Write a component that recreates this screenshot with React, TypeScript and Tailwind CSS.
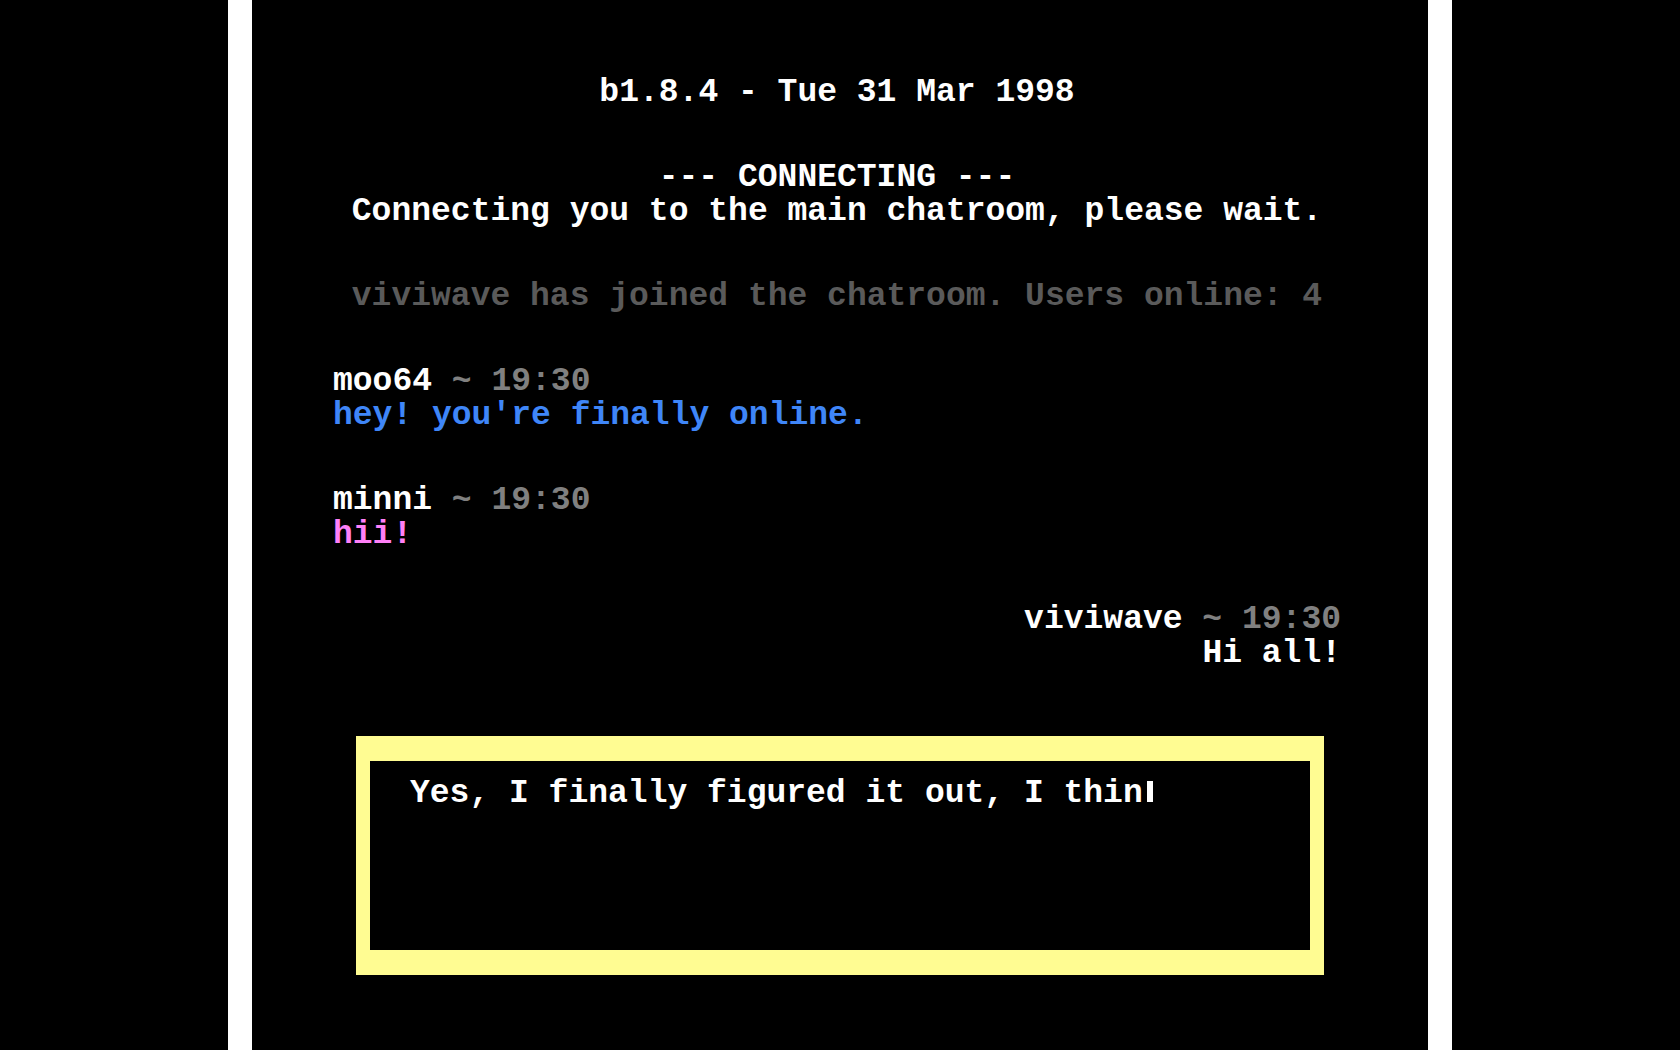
import { useState } from "react";

type Message = {
  id: number;
  author: string;
  time: string;
  text: string;
  color: string;
  own?: boolean;
};

const messages: Message[] = [
  {
    id: 1,
    author: "moo64",
    time: "19:30",
    text: "hey! you're finally online.",
    color: "text-[#3f86f8]",
  },
  {
    id: 2,
    author: "minni",
    time: "19:30",
    text: "hii!",
    color: "text-[#ff80f8]",
  },
  {
    id: 3,
    author: "viviwave",
    time: "19:30",
    text: "Hi all!",
    color: "text-white",
    own: true,
  },
];

const ChatMessage = ({ message }: { message: Message }) => (
  <li className={message.own ? "text-right" : "text-left"}>
    <p>
      {message.author} <span className="text-[#808080]">~ {message.time}</span>
    </p>
    <p className={message.color}>{message.text}</p>
  </li>
);

const MessageBox = () => {
  const [draft, setDraft] = useState("Yes, I finally figured it out, I thin");

  return (
    <form className="relative mx-26 mt-[65px]">
      <textarea
        aria-label="Message"
        value={draft}
        spellCheck={false}
        onChange={(e) => setDraft(e.target.value)}
        className="block h-[239px] w-full resize-none border-x-14 border-y-25 border-[#fffc92] bg-black pt-4 pl-10 text-white caret-transparent outline-none"
      />
      {/* Block cursor after the last typed character */}
      <span
        aria-hidden="true"
        className="pointer-events-none absolute top-[45px] ml-14 h-[21px] w-2 border-l-2 border-black bg-white"
        style={{ left: `${draft.length}ch` }}
      />
    </form>
  );
};

const App = () => {
  return (
    <div className="min-h-screen bg-black">
      <main className="mx-auto min-h-screen w-full max-w-[1224px] border-x-24 border-white bg-black pt-[76px] pb-16 font-['Liberation_Mono',monospace] text-[33px] leading-[34px] font-bold text-white">
        <div className="flex flex-col gap-[51px] pr-[87px] pl-[81px]">
          <h1 className="text-center">b1.8.4 - Tue 31 Mar 1998</h1>

          <div className="text-center">
            <h2>--- CONNECTING ---</h2>
            <p>Connecting you to the main chatroom, please wait.</p>
          </div>

          <p className="text-center text-[#5a5a5a]">
            viviwave has joined the chatroom. Users online: 4
          </p>

          <ul className="flex flex-col gap-[51px]">
            {messages.map((message) => (
              <ChatMessage key={message.id} message={message} />
            ))}
          </ul>
        </div>

        <MessageBox />
      </main>
    </div>
  );
};

export default App;
